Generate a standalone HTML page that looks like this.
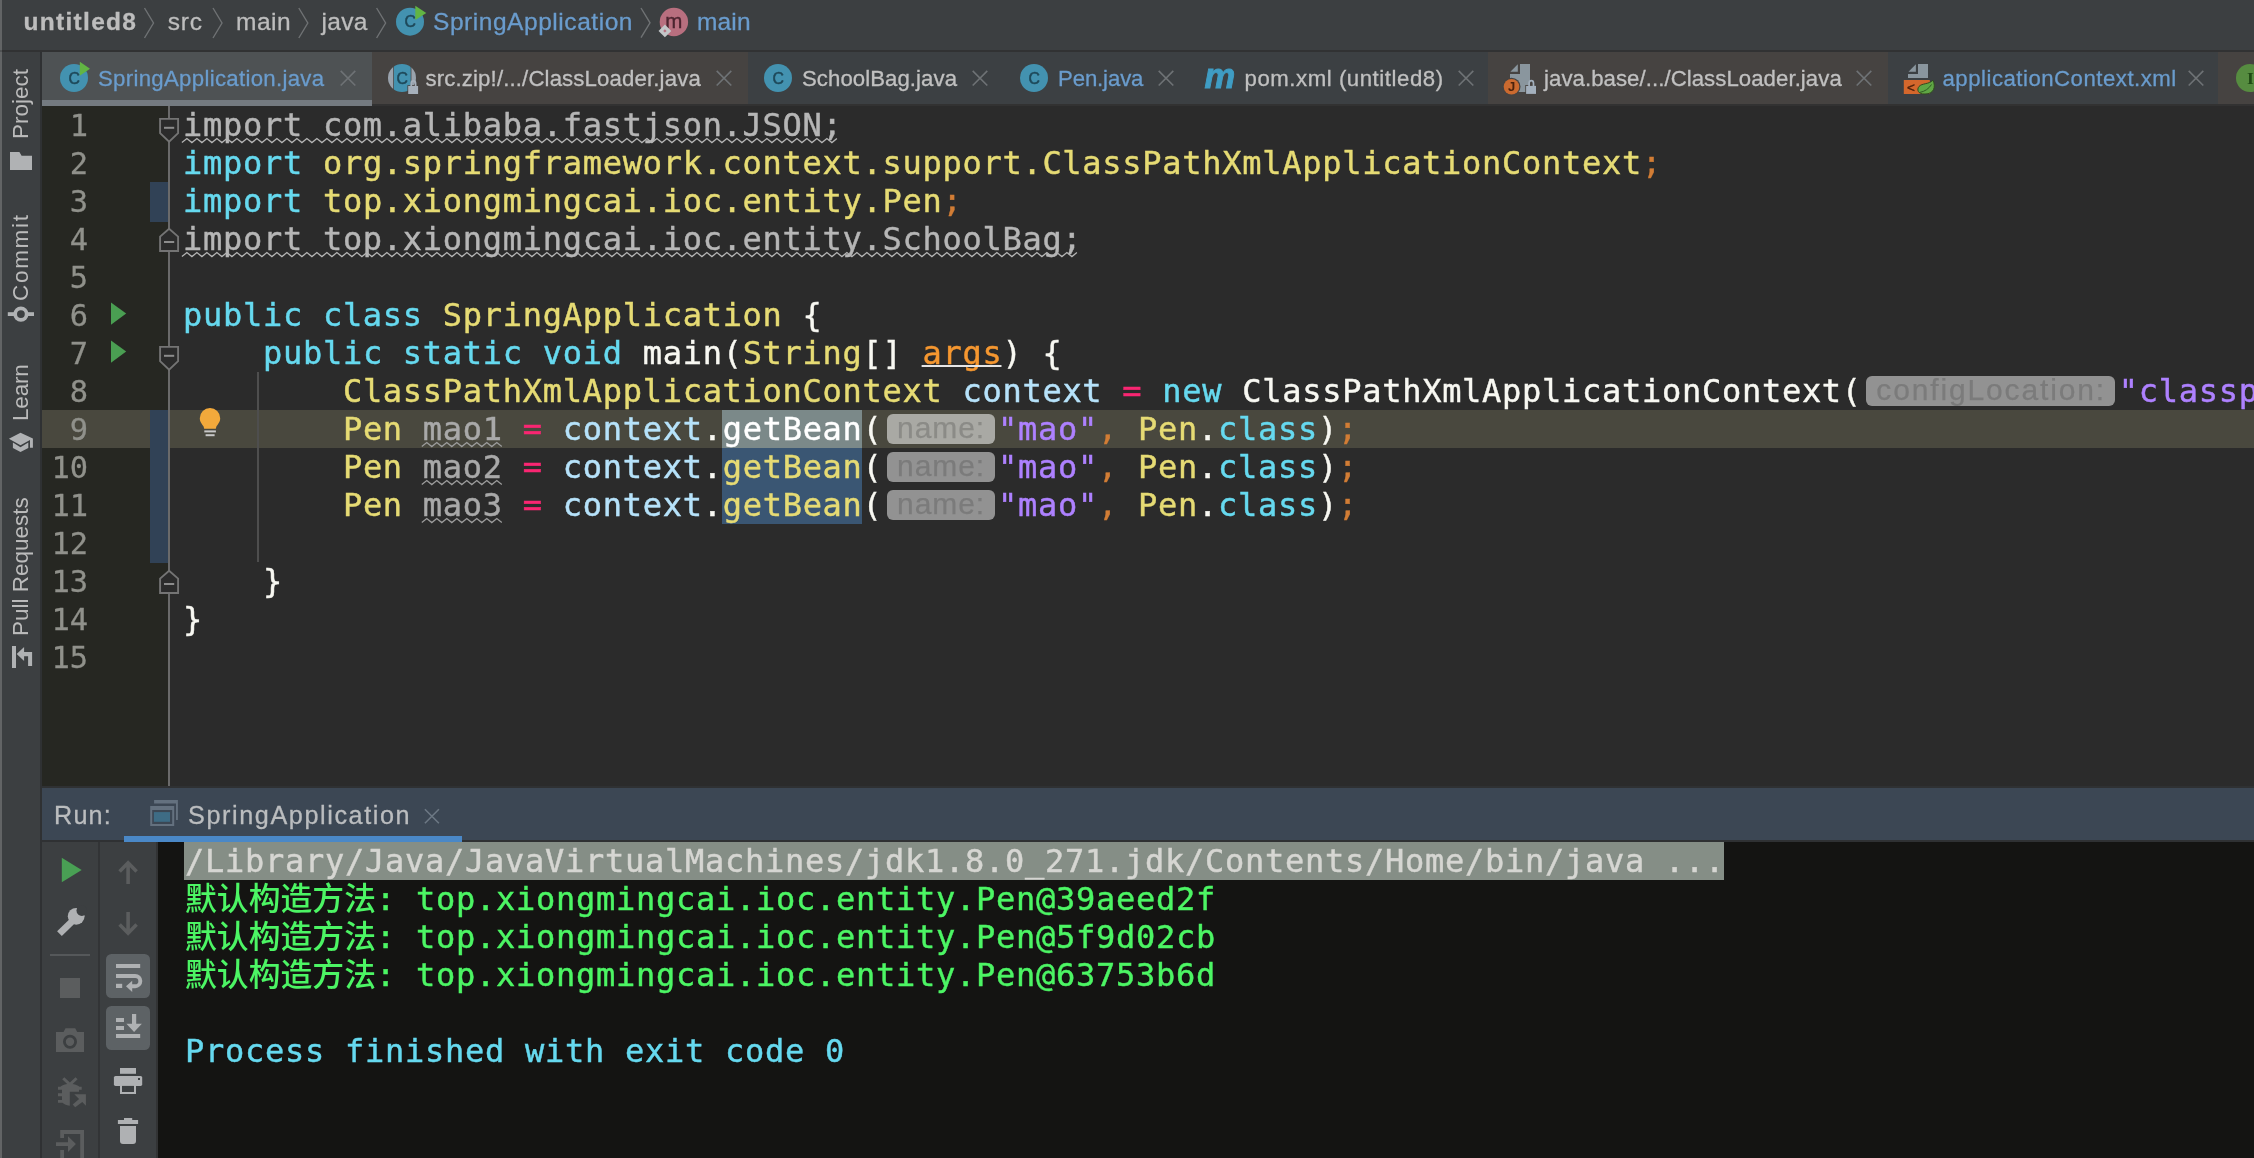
<!DOCTYPE html>
<html lang="en">
<head>
<meta charset="utf-8">
<title>untitled8 – SpringApplication.java</title>
<style>
html,body{margin:0;padding:0;}
body{-webkit-font-smoothing:antialiased;width:2254px;height:1158px;overflow:hidden;background:#2b2b2b;position:relative;
  font-family:"Liberation Sans",sans-serif;color:#bbbbbb;}
.abs{position:absolute;}
/* ---------- breadcrumb bar ---------- */
#crumbs{left:0;top:0;width:2254px;height:50px;background:#3c3f41;}
#crumbs .t{position:absolute;top:7.3px;font-size:24.5px;-webkit-text-stroke:0.3px currentColor;line-height:30px;color:#bdbdbd;white-space:pre;}
#crumbs .b{font-weight:bold;}
#crumbs .blue{color:#6a9ccd;}
#crumbsep{left:0;top:50px;width:2254px;height:2px;background:#313233;}
/* ---------- left strip ---------- */
#lstrip{left:0;top:52px;width:40px;height:1106px;background:#3c3f41;}
#ledge{left:0;top:0;width:2px;height:1158px;background:#626465;z-index:5;}
#ledge2{left:0;top:50px;width:2px;height:2px;background:#505253;z-index:6;}
#lsep{left:40px;top:52px;width:2px;height:1106px;background:#2f3133;}
.vlabel{position:absolute;left:7px;width:28px;font-size:22.5px;line-height:28px;color:#bbbbbb;white-space:pre;
  transform-origin:0 0;transform:rotate(-90deg);}
/* ---------- tab bar ---------- */
#tabs{left:42px;top:52px;width:2212px;height:52px;background:#3c3f41;}
#tabline{left:42px;top:104px;width:2212px;height:2px;background:#323232;}
.tab{position:absolute;top:0;height:52px;}
#tabs .lbl{position:absolute;top:64.5px;-webkit-text-stroke:0.3px currentColor;font-size:22.2px;line-height:28px;color:#c0c0c0;white-space:pre;}
#tabs .lbl.blue{color:#6a9ccd;}
.tab svg{position:absolute;}
/* ---------- editor ---------- */
#gutter{left:42px;top:106px;width:126px;height:680px;background:#262722;}
#gline{left:168px;top:106px;width:2px;height:680px;background:#6a6a6a;}
#editor{left:170px;top:106px;width:2084px;height:680px;background:#2b2b2b;overflow:hidden;}
.code,.lnum,.con{font-family:"DejaVu Sans Mono","Liberation Mono",monospace;font-size:32px;letter-spacing:0.72px;line-height:38px;white-space:pre;}
.code,.con{-webkit-text-stroke:0.45px currentColor;}
.lnum{font-size:30.4px;letter-spacing:0;-webkit-text-stroke:0.3px currentColor;}
.row{position:absolute;left:0;height:38px;white-space:pre;}

#lnums{left:42px;top:107px;width:46px;height:570px;}
.lnum{position:absolute;right:0;height:38px;color:#90918b;text-align:right;}
#code{will-change:transform;left:182.56px;top:0;width:2072px;height:786px;overflow:hidden;color:#f8f8f2;}
.k{color:#66d9ef}.y{color:#e6db74}.w{color:#f8f8f2}.o{color:#d27d35}.g{color:#b6b6b6}.p{color:#f92672}
.s{color:#ae81ff}.l{color:#b6e2fa}.a{color:#f59730}.u{color:#a9a9a9}.gbw{color:#ffffff}
.hint{display:inline-block;vertical-align:top;margin:3.8px 3px 0 4.5px;height:30px;line-height:27px;border-radius:6px;
  background:#929292;color:#7b7b7b;font-family:"Liberation Sans",sans-serif;font-size:30px;width:98px;padding-left:10px;letter-spacing:0.9px;-webkit-text-stroke:0.25px currentColor;overflow:hidden;}
.hint.h2{width:238.3px;letter-spacing:1.85px;margin-right:4.2px;}
.hint.hc{background:#a9a9a4;color:#8b8b87;}
/* ---------- run panel ---------- */
#runsep{left:42px;top:786px;width:2212px;height:2px;background:#2f3133;}
#runhdr{left:42px;top:788px;width:2212px;height:52px;background:#3c4754;}
#runline{left:42px;top:840px;width:2212px;height:2px;background:#2f3133;}
#rt1{left:42px;top:842px;width:56px;height:316px;background:#3c3f41;}
#rtsep{left:98px;top:842px;width:2px;height:316px;background:#323436;}
#rt2{left:100px;top:842px;width:56px;height:316px;background:#3c3f41;}
#console{left:158px;top:842px;width:2096px;height:316px;background:#141412;overflow:hidden;}

.rt{font-size:25.2px;-webkit-text-stroke:0.3px currentColor;line-height:30px;color:#bbbdbf;white-space:pre;}
#rtsep2{left:156px;top:842px;width:2px;height:316px;background:#323334;}
.con{letter-spacing:0.734px;}
.con .cjk{font-family:"Liberation Mono","Noto Sans CJK SC","WenQuanYi Zen Hei",monospace;font-size:31.83px;font-weight:500;line-height:0;-webkit-text-stroke:0;letter-spacing:0;}
#crumbs,#tabs,#lnums,.con,.rt,.vlabel{will-change:transform;}
</style>
</head>
<body>
<div id="crumbs" class="abs">
 <span class="t b" style="left:23.5px;letter-spacing:1.3px">untitled8</span>
 <span class="t" style="left:167.7px;letter-spacing:0.8px">src</span>
 <span class="t" style="left:236px;letter-spacing:0.5px">main</span>
 <span class="t" style="left:321.5px;letter-spacing:0.35px">java</span>
 <span class="t blue" style="left:433px;letter-spacing:0.55px">SpringApplication</span>
 <span class="t blue" style="left:697px;letter-spacing:0.15px">main</span>
 <svg class="abs" style="left:0;top:0" width="800" height="50" viewBox="0 0 800 50">
  <g fill="none" stroke="#6f7274" stroke-width="1.4">
   <polyline points="144.5,8 153.5,23 144.5,38"/>
   <polyline points="213,8 222,23 213,38"/>
   <polyline points="298.8,8 307.8,23 298.8,38"/>
   <polyline points="376.6,8 385.6,23 376.6,38"/>
   <polyline points="641,8 650,22.8 641,37.6"/>
  </g>
  <!-- class icon with run mark -->
  <circle cx="410" cy="21.7" r="14" fill="#4392b0"/>
  <text x="410.3" y="27.3" font-family="Liberation Sans, sans-serif" font-size="15.8" text-anchor="middle" fill="#1e4859" stroke="#1e4859" stroke-width="0.5">C</text>
  <polygon points="415.3,5.8 426.3,13 415.3,20" fill="#62b543"/>
  <!-- method icon -->
  <circle cx="673.9" cy="22" r="14.2" fill="#b86f7f"/>
  <text x="673.9" y="27.9" font-family="Liberation Sans, sans-serif" font-size="20.5" text-anchor="middle" fill="#4c2530" stroke="#4c2530" stroke-width="0.4">m</text>
  <rect x="660.4" y="26.4" width="9" height="9" transform="rotate(45 664.9 30.9)" fill="#c3c6c8"/>
  <rect x="663.7" y="29.7" width="2.4" height="2.4" transform="rotate(45 664.9 30.9)" fill="#b86f7f"/>
 </svg>
</div>
<div id="crumbsep" class="abs"></div>
<div id="ledge" class="abs"></div><div id="ledge2" class="abs"></div>
<div id="lstrip" class="abs"></div>
<div id="lsep" class="abs"></div>
<div class="vlabel" style="top:139px;">Project</div>
<div class="vlabel" style="top:301px;letter-spacing:1.7px">Commit</div>
<div class="vlabel" style="top:421px;letter-spacing:-0.2px">Learn</div>
<div class="vlabel" style="top:636px;">Pull Requests</div>
<svg class="abs" style="left:0;top:52px" width="42" height="740" viewBox="0 52 42 740">
 <g fill="#b0b2b4">
  <!-- project folder -->
  <path d="M10 152 H19.4 L21.6 155.8 H32 V170 H10 Z"/>
  <!-- commit -->
  <rect x="7.8" y="312.2" width="26.2" height="3.8"/>
  <circle cx="20.9" cy="314.1" r="7.6"/>
  <circle cx="20.9" cy="314.1" r="3.9" fill="#3c3f41"/>
  <!-- learn -->
  <path d="M8.9 438.7 L20.5 432.8 L32.9 438.5 V447.7 H30 V440 L20.5 445.2 Z"/>
  <path d="M12.9 442.6 L20.5 447.3 L28.3 442.6 V447.9 L20.5 452 L12.9 447.9 Z"/>
  <!-- pull requests -->
  <rect x="12" y="646" width="4" height="22"/>
  <path d="M16.7 654 L24.1 647 V652 H32.1 V666 H28.1 V656.2 H24.1 V661.1 Z"/>
 </g>
</svg>
<div id="tabs" class="abs"><div class="abs" style="left:-42px;top:-52px;width:2254px;height:104px">
 <div class="abs" style="left:42px;top:52px;width:330px;height:52px;background:#4e5254"></div>
 <div class="abs" style="left:372px;top:52px;width:376px;height:52px;background:#464341"></div>
 <div class="abs" style="left:748px;top:52px;width:740px;height:52px;background:#3c4043"></div>
 <div class="abs" style="left:1488px;top:52px;width:400px;height:52px;background:#464341"></div>
 <div class="abs" style="left:1888px;top:52px;width:330px;height:52px;background:#3c4043"></div>
 <div class="abs" style="left:2218px;top:52px;width:36px;height:52px;background:#464341"></div>
 <span class="lbl blue" style="left:98px;letter-spacing:0.31px">SpringApplication.java</span>
 <span class="lbl" style="left:425.5px;letter-spacing:0.14px">src.zip!/.../ClassLoader.java</span>
 <span class="lbl" style="left:802px;letter-spacing:0.06px">SchoolBag.java</span>
 <span class="lbl blue" style="left:1058px;letter-spacing:-0.13px">Pen.java</span>
 <span class="lbl" style="left:1244.5px;letter-spacing:0.55px">pom.xml (untitled8)</span>
 <span class="lbl" style="left:1544px;letter-spacing:0.06px">java.base/.../ClassLoader.java</span>
 <span class="lbl blue" style="left:1942.5px;letter-spacing:0.50px">applicationContext.xml</span>
 <svg class="abs" style="left:0;top:0" width="2254" height="104" viewBox="0 0 2254 104">
  <g fill="none" stroke="#6e7275" stroke-width="1.6">
   <path d="M340.7 70.9 L355.3 85.5 M355.3 70.9 L340.7 85.5"/><path d="M716.7 70.9 L731.3 85.5 M731.3 70.9 L716.7 85.5"/><path d="M972.7 70.9 L987.3 85.5 M987.3 70.9 L972.7 85.5"/><path d="M1158.7 70.9 L1173.3 85.5 M1173.3 70.9 L1158.7 85.5"/><path d="M1458.7 70.9 L1473.3 85.5 M1473.3 70.9 L1458.7 85.5"/><path d="M1856.7 70.9 L1871.3 85.5 M1871.3 70.9 L1856.7 85.5"/><path d="M2188.7 70.9 L2203.3 85.5 M2203.3 70.9 L2188.7 85.5"/>
  </g>
  <!-- tab1: runnable class -->
  <circle cx="74" cy="78" r="14" fill="#4392b0"/><text x="74.3" y="83.6" font-family="Liberation Sans, sans-serif" font-size="15.8" text-anchor="middle" fill="#1e4859" stroke="#1e4859" stroke-width="0.5">C</text>
  <polygon points="79.8,61.8 90,68.8 79.8,75.7" fill="#62b543"/>
  <!-- tab2: library class (locked) -->
  <clipPath id="cpA"><rect x="388" y="60" width="5.2" height="36"/><rect x="411.4" y="60" width="5" height="36"/></clipPath>
  <clipPath id="cpB"><rect x="393.9" y="60" width="16.8" height="36"/></clipPath>
  <circle cx="402" cy="78" r="14" fill="#9aa3ad" clip-path="url(#cpA)"/>
  <g clip-path="url(#cpB)"><circle cx="402" cy="78" r="14" fill="#4392b0"/><text x="402.3" y="83.6" font-family="Liberation Sans, sans-serif" font-size="15.8" text-anchor="middle" fill="#1e4859" stroke="#1e4859" stroke-width="0.5">C</text></g>
  <rect x="407.4" y="85.2" width="11.4" height="9.6" fill="#464341"/>
  <path d="M411.2 86 V83.5 A2.2 2.6 0 0 1 415.6 83.5 V86" fill="none" stroke="#a6b0bb" stroke-width="1.7"/>
  <rect x="408.2" y="86" width="9.9" height="8" fill="#a6b0bb"/>
  <!-- tab3, tab4: class -->
  <circle cx="778" cy="78" r="14" fill="#4392b0"/><text x="778.3" y="83.6" font-family="Liberation Sans, sans-serif" font-size="15.8" text-anchor="middle" fill="#1e4859" stroke="#1e4859" stroke-width="0.5">C</text><circle cx="1034" cy="78" r="14" fill="#4392b0"/><text x="1034.3" y="83.6" font-family="Liberation Sans, sans-serif" font-size="15.8" text-anchor="middle" fill="#1e4859" stroke="#1e4859" stroke-width="0.5">C</text>
  <!-- tab5: maven -->
  <text x="1204.5" y="87.7" font-family="Liberation Sans, sans-serif" font-weight="bold" font-style="italic" font-size="34.5" fill="#3f9dc4" stroke="#3f9dc4" stroke-width="0.9">m</text>
  <!-- tab6: java file, locked -->
  <g fill="#8a969e">
   <polygon points="1510.4,71.8 1517.8,64.3 1517.8,71.8"/>
   <polygon points="1520,64 1530,64 1530,92 1510,92 1510,74 1520,74"/>
  </g>
  <circle cx="1511.5" cy="86.7" r="9" fill="#464341"/>
  <circle cx="1511.5" cy="86.7" r="7.8" fill="#cb6a2f"/>
  <text x="1511.7" y="91.3" font-family="Liberation Sans, sans-serif" font-size="13" font-weight="bold" text-anchor="middle" fill="#4a220c">J</text>
  <rect x="1525.3" y="85" width="11.5" height="9.7" fill="#464341"/>
  <path d="M1529.1 86 V83.3 A2.2 2.6 0 0 1 1533.5 83.3 V86" fill="none" stroke="#a3b0bd" stroke-width="1.7"/>
  <rect x="1526.1" y="85.9" width="9.9" height="8" fill="#a3b0bd"/>
  <!-- tab7: spring xml -->
  <g fill="#8a969e">
   <polygon points="1908.5,71.8 1915.9,64.3 1915.9,71.8"/>
   <polygon points="1918,64 1928,64 1928,78 1908,78 1908,74 1918,74"/>
  </g>
  <rect x="1903.8" y="80" width="26" height="14" fill="#d4672c"/>
  <text x="1911" y="91.6" font-family="Liberation Sans, sans-serif" font-size="13.5" text-anchor="middle" fill="#4a1f0a" stroke="#4a1f0a" stroke-width="0.4">&lt;</text>
  <path d="M1933 80.2 C1936 87 1934 94 1925 94 C1918 94.5 1916.5 89.5 1919 86.5 C1922 83 1929 84.5 1933 80.2 Z" fill="#5fa644" stroke="#2f4a20" stroke-width="1"/>
  <path d="M1919.5 92.5 C1925 91.5 1929 88.5 1931.5 84.5" fill="none" stroke="#2f5a22" stroke-width="1"/>
  <!-- tab8: interface -->
  <circle cx="2250" cy="78" r="14" fill="#568c40"/>
  <text x="2250.3" y="84.3" font-family="Liberation Serif, serif" font-weight="bold" font-size="17.5" text-anchor="middle" fill="#1f4a14">I</text>
 </svg>
</div></div>
<div id="tabline" class="abs"></div>
<div class="abs" style="left:42px;top:100px;width:330px;height:6px;background:#747a80"></div>
<!--EDITOR_START-->
<div id="gutter" class="abs"></div>
<div id="editor" class="abs"></div>
<div class="abs" style="left:42px;top:410px;width:2212px;height:38px;background:#49483e"></div>
<div class="abs" style="left:150px;top:182px;width:18px;height:40px;background:#314256"></div>
<div class="abs" style="left:150px;top:410px;width:18px;height:153px;background:#314256"></div>
<div id="gline" class="abs"></div>
<div class="abs" style="left:257.2px;top:372px;width:1.5px;height:190px;background:#4e4e4e"></div>
<div class="abs" style="left:721.8px;top:410px;width:139.9px;height:38px;background:#7b8989"></div>
<div class="abs" style="left:721.8px;top:448px;width:139.9px;height:76px;background:#3a5673"></div>
<div id="lnums" class="abs"><div class="lnum" style="top:0px">1</div><div class="lnum" style="top:38px">2</div><div class="lnum" style="top:76px">3</div><div class="lnum" style="top:114px">4</div><div class="lnum" style="top:152px">5</div><div class="lnum" style="top:190px">6</div><div class="lnum" style="top:228px">7</div><div class="lnum" style="top:266px">8</div><div class="lnum" style="top:304px">9</div><div class="lnum" style="top:342px">10</div><div class="lnum" style="top:380px">11</div><div class="lnum" style="top:418px">12</div><div class="lnum" style="top:456px">13</div><div class="lnum" style="top:494px">14</div><div class="lnum" style="top:532px">15</div></div>
<div id="code" class="abs"><div class="row code" style="top:106px"><span class="g">import com.alibaba.fastjson.JSON;</span></div><div class="row code" style="top:144px"><span class="k">import </span><span class="y">org.springframework.context.support.ClassPathXmlApplicationContext</span><span class="o">;</span></div><div class="row code" style="top:182px"><span class="k">import </span><span class="y">top.xiongmingcai.ioc.entity.Pen</span><span class="o">;</span></div><div class="row code" style="top:220px"><span class="g">import top.xiongmingcai.ioc.entity.SchoolBag;</span></div><div class="row code" style="top:296px"><span class="k">public class </span><span class="y">SpringApplication</span><span class="w"> {</span></div><div class="row code" style="top:334px">    <span class="k">public static void </span><span class="w">main(</span><span class="y">String</span><span class="w">[] </span><span class="a">args</span><span class="w">) {</span></div><div class="row code" style="top:372px">        <span class="y">ClassPathXmlApplicationContext </span><span class="l">context </span><span class="p">= </span><span class="k">new </span><span class="w">ClassPathXmlApplicationContext(</span><span class="hint h2">configLocation:</span><span class="s">"classpath:applicationContext.xml"</span><span class="w">)</span><span class="o">;</span></div><div class="row code" style="top:410px">        <span class="y">Pen </span><span class="u">mao1</span> <span class="p">= </span><span class="l">context</span><span class="w">.</span><span class="gbw">getBean</span><span class="w">(</span><span class="hint hc">name:</span><span class="s">"mao"</span><span class="o">, </span><span class="y">Pen</span><span class="w">.</span><span class="k">class</span><span class="w">)</span><span class="o">;</span></div><div class="row code" style="top:448px">        <span class="y">Pen </span><span class="u">mao2</span> <span class="p">= </span><span class="l">context</span><span class="w">.</span><span class="y">getBean</span><span class="w">(</span><span class="hint ">name:</span><span class="s">"mao"</span><span class="o">, </span><span class="y">Pen</span><span class="w">.</span><span class="k">class</span><span class="w">)</span><span class="o">;</span></div><div class="row code" style="top:486px">        <span class="y">Pen </span><span class="u">mao3</span> <span class="p">= </span><span class="l">context</span><span class="w">.</span><span class="y">getBean</span><span class="w">(</span><span class="hint ">name:</span><span class="s">"mao"</span><span class="o">, </span><span class="y">Pen</span><span class="w">.</span><span class="k">class</span><span class="w">)</span><span class="o">;</span></div><div class="row code" style="top:562px">    <span class="w">}</span></div><div class="row code" style="top:600px"><span class="w">}</span></div></div>
<svg class="abs" style="left:0;top:0" width="2254" height="790" viewBox="0 0 2254 790"><polyline points="181.9,142.6 186.9,138.6 191.9,142.6 196.9,138.6 201.9,142.6 206.9,138.6 211.9,142.6 216.9,138.6 221.9,142.6 226.9,138.6 231.9,142.6 236.9,138.6 241.9,142.6 246.9,138.6 251.9,142.6 256.9,138.6 261.9,142.6 266.9,138.6 271.9,142.6 276.9,138.6 281.9,142.6 286.9,138.6 291.9,142.6 296.9,138.6 301.9,142.6 306.9,138.6 311.9,142.6 316.9,138.6 321.9,142.6 326.9,138.6 331.9,142.6 336.9,138.6 341.9,142.6 346.9,138.6 351.9,142.6 356.9,138.6 361.9,142.6 366.9,138.6 371.9,142.6 376.9,138.6 381.9,142.6 386.9,138.6 391.9,142.6 396.9,138.6 401.9,142.6 406.9,138.6 411.9,142.6 416.9,138.6 421.9,142.6 426.9,138.6 431.9,142.6 436.9,138.6 441.9,142.6 446.9,138.6 451.9,142.6 456.9,138.6 461.9,142.6 466.9,138.6 471.9,142.6 476.9,138.6 481.9,142.6 486.9,138.6 491.9,142.6 496.9,138.6 501.9,142.6 506.9,138.6 511.9,142.6 516.9,138.6 521.9,142.6 526.9,138.6 531.9,142.6 536.9,138.6 541.9,142.6 546.9,138.6 551.9,142.6 556.9,138.6 561.9,142.6 566.9,138.6 571.9,142.6 576.9,138.6 581.9,142.6 586.9,138.6 591.9,142.6 596.9,138.6 601.9,142.6 606.9,138.6 611.9,142.6 616.9,138.6 621.9,142.6 626.9,138.6 631.9,142.6 636.9,138.6 641.9,142.6 646.9,138.6 651.9,142.6 656.9,138.6 661.9,142.6 666.9,138.6 671.9,142.6 676.9,138.6 681.9,142.6 686.9,138.6 691.9,142.6 696.9,138.6 701.9,142.6 706.9,138.6 711.9,142.6 716.9,138.6 721.9,142.6 726.9,138.6 731.9,142.6 736.9,138.6 741.9,142.6 746.9,138.6 751.9,142.6 756.9,138.6 761.9,142.6 766.9,138.6 771.9,142.6 776.9,138.6 781.9,142.6 786.9,138.6 791.9,142.6 796.9,138.6 801.9,142.6 806.9,138.6 811.9,142.6 816.9,138.6 821.9,142.6 826.9,138.6 831.9,142.6 836.9,138.6" fill="none" stroke="#b4b4b4" stroke-width="1.3"/>
<polyline points="181.9,256.6 186.9,252.6 191.9,256.6 196.9,252.6 201.9,256.6 206.9,252.6 211.9,256.6 216.9,252.6 221.9,256.6 226.9,252.6 231.9,256.6 236.9,252.6 241.9,256.6 246.9,252.6 251.9,256.6 256.9,252.6 261.9,256.6 266.9,252.6 271.9,256.6 276.9,252.6 281.9,256.6 286.9,252.6 291.9,256.6 296.9,252.6 301.9,256.6 306.9,252.6 311.9,256.6 316.9,252.6 321.9,256.6 326.9,252.6 331.9,256.6 336.9,252.6 341.9,256.6 346.9,252.6 351.9,256.6 356.9,252.6 361.9,256.6 366.9,252.6 371.9,256.6 376.9,252.6 381.9,256.6 386.9,252.6 391.9,256.6 396.9,252.6 401.9,256.6 406.9,252.6 411.9,256.6 416.9,252.6 421.9,256.6 426.9,252.6 431.9,256.6 436.9,252.6 441.9,256.6 446.9,252.6 451.9,256.6 456.9,252.6 461.9,256.6 466.9,252.6 471.9,256.6 476.9,252.6 481.9,256.6 486.9,252.6 491.9,256.6 496.9,252.6 501.9,256.6 506.9,252.6 511.9,256.6 516.9,252.6 521.9,256.6 526.9,252.6 531.9,256.6 536.9,252.6 541.9,256.6 546.9,252.6 551.9,256.6 556.9,252.6 561.9,256.6 566.9,252.6 571.9,256.6 576.9,252.6 581.9,256.6 586.9,252.6 591.9,256.6 596.9,252.6 601.9,256.6 606.9,252.6 611.9,256.6 616.9,252.6 621.9,256.6 626.9,252.6 631.9,256.6 636.9,252.6 641.9,256.6 646.9,252.6 651.9,256.6 656.9,252.6 661.9,256.6 666.9,252.6 671.9,256.6 676.9,252.6 681.9,256.6 686.9,252.6 691.9,256.6 696.9,252.6 701.9,256.6 706.9,252.6 711.9,256.6 716.9,252.6 721.9,256.6 726.9,252.6 731.9,256.6 736.9,252.6 741.9,256.6 746.9,252.6 751.9,256.6 756.9,252.6 761.9,256.6 766.9,252.6 771.9,256.6 776.9,252.6 781.9,256.6 786.9,252.6 791.9,256.6 796.9,252.6 801.9,256.6 806.9,252.6 811.9,256.6 816.9,252.6 821.9,256.6 826.9,252.6 831.9,256.6 836.9,252.6 841.9,256.6 846.9,252.6 851.9,256.6 856.9,252.6 861.9,256.6 866.9,252.6 871.9,256.6 876.9,252.6 881.9,256.6 886.9,252.6 891.9,256.6 896.9,252.6 901.9,256.6 906.9,252.6 911.9,256.6 916.9,252.6 921.9,256.6 926.9,252.6 931.9,256.6 936.9,252.6 941.9,256.6 946.9,252.6 951.9,256.6 956.9,252.6 961.9,256.6 966.9,252.6 971.9,256.6 976.9,252.6 981.9,256.6 986.9,252.6 991.9,256.6 996.9,252.6 1001.9,256.6 1006.9,252.6 1011.9,256.6 1016.9,252.6 1021.9,256.6 1026.9,252.6 1031.9,256.6 1036.9,252.6 1041.9,256.6 1046.9,252.6 1051.9,256.6 1056.9,252.6 1061.9,256.6 1066.9,252.6 1071.9,256.6 1076.9,252.6" fill="none" stroke="#b4b4b4" stroke-width="1.3"/>
<polyline points="421.8,446.6 426.8,442.6 431.8,446.6 436.8,442.6 441.8,446.6 446.8,442.6 451.8,446.6 456.8,442.6 461.8,446.6 466.8,442.6 471.8,446.6 476.8,442.6 481.8,446.6 486.8,442.6 491.8,446.6 496.8,442.6 501.8,446.6" fill="none" stroke="#9c9c9c" stroke-width="1.3"/>
<polyline points="421.8,484.6 426.8,480.6 431.8,484.6 436.8,480.6 441.8,484.6 446.8,480.6 451.8,484.6 456.8,480.6 461.8,484.6 466.8,480.6 471.8,484.6 476.8,480.6 481.8,484.6 486.8,480.6 491.8,484.6 496.8,480.6 501.8,484.6" fill="none" stroke="#9c9c9c" stroke-width="1.3"/>
<polyline points="421.8,522.6 426.8,518.6 431.8,522.6 436.8,518.6 441.8,522.6 446.8,518.6 451.8,522.6 456.8,518.6 461.8,522.6 466.8,518.6 471.8,522.6 476.8,518.6 481.8,522.6 486.8,518.6 491.8,522.6 496.8,518.6 501.8,522.6" fill="none" stroke="#9c9c9c" stroke-width="1.3"/>
<rect x="921.6" y="365.0" width="79.9" height="2" fill="#e6e6e6"/>
<path d="M160.1 118.9 H178.1 V133.2 L169.1 141.6 L160.1 133.2 Z" fill="#2b2b2b" stroke="#747474" stroke-width="1.9"/><rect x="164" y="126.8" width="10.2" height="2" fill="#8c8c8c"/>
<path d="M160.1 251 H178.1 V236.6 L169.1 228.8 L160.1 236.6 Z" fill="#2b2b2b" stroke="#747474" stroke-width="1.9"/><rect x="164" y="241" width="10.2" height="2" fill="#8c8c8c"/>
<path d="M160.1 346.9 H178.1 V361.2 L169.1 369.6 L160.1 361.2 Z" fill="#2b2b2b" stroke="#747474" stroke-width="1.9"/><rect x="164" y="354.8" width="10.2" height="2" fill="#8c8c8c"/>
<path d="M160.1 593 H178.1 V578.6 L169.1 570.8 L160.1 578.6 Z" fill="#2b2b2b" stroke="#747474" stroke-width="1.9"/><rect x="164" y="583" width="10.2" height="2" fill="#8c8c8c"/>
<polygon points="111,302.4 126.2,313.6 111,324.8" fill="#4a9e52"/>
<polygon points="111,340.4 126.2,351.6 111,362.8" fill="#4a9e52"/>
<path d="M210 408 a10.2 10.2 0 0 1 10.2 10.2 c0 4 -2.6 6.2 -3.8 8.2 l-0.6 2.4 h-11.6 l-0.6 -2.4 c-1.2 -2 -3.8 -4.2 -3.8 -8.2 a10.2 10.2 0 0 1 10.2 -10.2 z" fill="#f2a93b"/>
<rect x="204.3" y="430.4" width="11.6" height="2" fill="#c8c8c8"/><rect x="205.6" y="434.2" width="9" height="2" fill="#c8c8c8"/></svg>
<!--EDITOR_END-->
<!--RUN_START-->
<div id="runsep" class="abs"></div>
<div id="runhdr" class="abs"></div>
<div id="runline" class="abs"></div>
<div class="abs" style="left:124px;top:836px;width:338px;height:6px;background:#4a88c7"></div>
<span class="abs rt" style="left:53.6px;top:800px;letter-spacing:1.2px">Run:</span>
<span class="abs rt" style="left:188px;top:800px;letter-spacing:1.6px">SpringApplication</span>
<div id="rt1" class="abs"></div><div id="rtsep" class="abs"></div><div id="rt2" class="abs"></div><div id="rtsep2" class="abs"></div>
<div id="console" class="abs"></div>
<div class="abs" style="left:184px;top:842px;width:1540px;height:38px;background:#858e86"></div>
<div class="con abs" style="left:184.5px;top:842px;color:#d6d6d2">/Library/Java/JavaVirtualMachines/jdk1.8.0_271.jdk/Contents/Home/bin/java ...</div>
<div class="con abs" style="left:184.5px;top:880px;color:#4cf564"><span class="cjk">默认构造方法</span>: top.xiongmingcai.ioc.entity.Pen@39aeed2f</div>
<div class="con abs" style="left:184.5px;top:918px;color:#4cf564"><span class="cjk">默认构造方法</span>: top.xiongmingcai.ioc.entity.Pen@5f9d02cb</div>
<div class="con abs" style="left:184.5px;top:956px;color:#4cf564"><span class="cjk">默认构造方法</span>: top.xiongmingcai.ioc.entity.Pen@63753b6d</div>
<div class="con abs" style="left:184.5px;top:1032px;color:#66d9ef">Process finished with exit code 0</div>
<svg class="abs" style="left:0;top:786px" width="480" height="372" viewBox="0 786 480 372"><path d="M154.1 800.1 H177.9 V820 H176 V803.6 H154.1 Z" fill="#64717f"/>
<path d="M150.2 806.1 H174.2 V826 H150.2 Z M152.2 810 V824 H172.2 V810 Z" fill="#64717f" fill-rule="evenodd"/>
<rect x="153.9" y="812.1" width="16.1" height="9.7" fill="#3e6c85"/>
<path d="M424.9 809.3 L438.9 823.3 M438.9 809.3 L424.9 823.3" stroke="#6c7884" stroke-width="1.6" fill="none"/>
<polygon points="61.8,857.8 81.7,870 61.8,882.3" fill="#49a054"/>
<g fill="#afb1b3"><path d="M57.1 931.3 L70.5 918.2 L75.2 922.9 L61.8 936 Z"/><circle cx="76.2" cy="916.3" r="8.4"/></g><circle cx="81.8" cy="910.6" r="5.3" fill="#3c3f41"/>
<rect x="50" y="954" width="40" height="2" fill="#55585a"/>
<rect x="60" y="978" width="20" height="20" fill="#5b5d5e"/>
<path d="M56 1032 H63.5 L65.5 1028.2 H75.2 L77.2 1032 H84 V1052 H56 Z" fill="#5b5d5e"/>
<circle cx="70" cy="1041.7" r="5.6" fill="none" stroke="#3c3f41" stroke-width="2.8"/>
<g fill="#5b5d5e" stroke="none"><path d="M62.2 1079.2 L64.3 1077.2 L69.9 1082.6 L75.5 1077.2 L77.6 1079.2 L72.6 1084 C76 1084.6 78.6 1086 79.4 1086.8 H81.7 V1089.8 H79 V1091.8 H69.8 V1105.7 C66 1105.3 63.4 1103.7 62.5 1102.7 H58 V1100 H62 V1096.2 H58 V1093.2 H62 V1089.8 H58 V1086.8 H60.4 C61.2 1086 63.8 1084.6 67.2 1084 Z"/><path d="M74.3 1094.3 H85.9 V1105.7 L82.3 1102.1 L75.2 1107.3 L72.7 1104.6 L79.1 1098.9 Z"/></g>
<g fill="#5b5d5e"><path d="M60.2 1130.1 H84 V1158 H80.2 V1133.9 H64 V1138 H60.2 Z"/><rect x="60.2" y="1150" width="3.8" height="8"/><path d="M56 1142.2 H68 V1136.3 L75.9 1144.1 L68 1152 V1146 H56 Z"/></g>
<g fill="none" stroke="#5b5d5e" stroke-width="3.6"><path d="M128.1 884 V862 M119.6 871.4 L128.1 862.8 L136.6 871.4"/><path d="M128.1 912 V934 M119.6 924.6 L128.1 933.2 L136.6 924.6"/></g>
<rect x="106" y="954" width="44" height="44" rx="5.5" fill="#5d6265"/><rect x="106" y="1006" width="44" height="44" rx="5.5" fill="#5d6265"/>
<g fill="#afb1b3"><rect x="116" y="964" width="24.2" height="4"/><rect x="116" y="983.8" width="6.2" height="4.2"/><path d="M116 974 H135.2 A7.1 7.1 0 0 1 135.2 988.2 H132.2 V992 L126 986.3 L132.2 980.8 V984.3 H135.2 A3.1 3.1 0 0 0 135.2 978 H116 Z"/></g>
<g fill="#afb1b3"><rect x="116" y="1018" width="8" height="4"/><rect x="116" y="1026" width="8" height="4"/><rect x="116" y="1034" width="24.2" height="4"/><path d="M132 1014 H136.2 V1023.8 H141.9 L134.1 1032 L126.4 1023.8 H132 Z"/></g>
<g fill="#afb1b3"><rect x="120" y="1068" width="16" height="5.8"/><rect x="113.9" y="1075.9" width="28.3" height="10" rx="1.6"/><path d="M120 1085 H136 V1094 H120 Z M122 1086 V1092 H134 V1086 Z" fill-rule="evenodd"/></g><rect x="122" y="1085.9" width="12" height="1.4" fill="#3c3f41"/><rect x="138" y="1078" width="2" height="2" fill="#3c3f41"/>
<g fill="#afb1b3"><rect x="117.9" y="1120" width="20.2" height="4"/><rect x="124" y="1118" width="8.2" height="2.5"/><path d="M120 1126 H136 V1140.9 A3 3 0 0 1 133 1143.9 H123 A3 3 0 0 1 120 1140.9 Z"/></g></svg>
<!--RUN_END-->
</body>
</html>
